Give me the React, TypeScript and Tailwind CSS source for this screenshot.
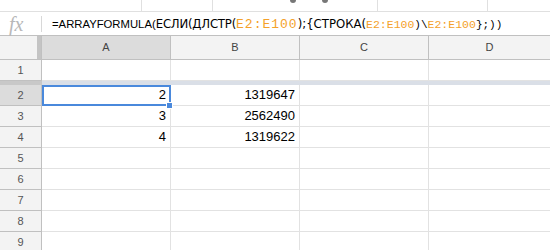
import React from "react";

const cols = ["A", "B", "C", "D"];
const rows: { n: number; a?: string; b?: string }[] = [
  { n: 1 },
  { n: 2, a: "2", b: "1319647" },
  { n: 3, a: "3", b: "2562490" },
  { n: 4, a: "4", b: "1319622" },
  { n: 5 },
  { n: 6 },
  { n: 7 },
  { n: 8 },
  { n: 9 },
];

const gridCols = "grid grid-cols-[42px_129px_129px_129px_1fr]";

function Row({ r }: { r: { n: number; a?: string; b?: string } }) {
  const sel = r.n === 2;
  return (
    <div className={gridCols + " h-[21px]"}>
      <div
        className={
          "flex items-center justify-center border-r border-b border-[#c0c0c0] text-[11px] text-[#555] " +
          (sel ? "bg-[#dcdcdc]" : "bg-[#f3f3f3]")
        }
      >
        {r.n}
      </div>
      <div className="relative flex items-center justify-end border-r border-b border-[#e2e2e2] pr-[4px] text-[13px] text-black">
        {r.a}
        {sel && (
          <>
            <div className="absolute z-10 left-0 top-0 -right-[1px] -bottom-[1px] border-2 border-[#4a89dc]" />
            <div className="absolute z-20 -right-[3px] -bottom-[4px] w-[7px] h-[7px] bg-[#4a89dc] border border-white" />
          </>
        )}
      </div>
      <div className="flex items-center justify-end border-r border-b border-[#e2e2e2] pr-[4px] text-[13px] text-black">
        {r.b}
      </div>
      <div className="border-r border-b border-[#e2e2e2]" />
      <div className="border-b border-[#e2e2e2]" />
    </div>
  );
}

export default function App() {
  const orange = "text-[#f4a12a]";
  const mono = "font-['Liberation_Mono',monospace]";
  const cyr = "font-['DejaVu_Sans_Condensed','Liberation_Sans',sans-serif]";
  return (
    <div className="w-[550px] h-[250px] overflow-hidden bg-white font-['Liberation_Sans',Arial,sans-serif]">
      {/* toolbar remnant */}
      <div className="flex h-[12px] border-b border-[#e0e0e0]">
        <div className="w-[142px] border-r border-[#e0e0e0]" />
        <div className="w-[71px] border-r border-[#e0e0e0]" />
        <div className="w-[165px] border-r border-[#e0e0e0] flex">
          <div className="ml-[77px] w-[6px] h-[3px] bg-[#777] rounded-b-sm" />
          <div className="ml-[26px] w-[6px] h-[3px] bg-[#777] rounded-b-sm" />
        </div>
        <div className="w-[110px] border-r border-[#e0e0e0]" />
      </div>

      {/* formula bar */}
      <div className="flex items-center h-[24px] border-b border-[#c0c0c0]">
        <div className="w-[41px] pl-[9px] font-['Liberation_Serif',serif] italic text-[20px] leading-none text-[#b8b8b8]">
          fx
        </div>
        <div className="w-px h-[16px] bg-[#d8d8d8]" />
        <div className="ml-[10px] flex items-baseline whitespace-pre text-black leading-none">
          <span className="font-['Liberation_Sans_Narrow','Liberation_Sans',sans-serif] text-[11.3px]">=ARRAYFORMULA(</span>
          <span className={cyr + " text-[13px] tracking-[-0.2px]"}>ЕСЛИ(ДЛСТР(</span>
          <span className={orange + " " + mono + " text-[13px] tracking-[1px]"}>E2:E100</span>
          <span className={cyr + " text-[13px]"}>);{"{"}СТРОКА(</span>
          <span className={orange + " " + mono + " text-[11.5px]"}>E2:E100</span>
          <span className={mono + " text-[11px]"}>)\</span>
          <span className={orange + " " + mono + " text-[11.5px]"}>E2:E100</span>
          <span className={mono + " text-[11px]"}>{"};))"}</span>
        </div>
      </div>

      {/* column headers */}
      <div className={gridCols + " h-[24px]"}>
        <div className="relative bg-[#f3f3f3] border-r border-b border-[#c0c0c0]">
          <div className="absolute right-0 top-0 bottom-0 w-[4px] bg-[#c4c4c4]" />
        </div>
        {cols.map((c, i) => (
          <div
            key={c}
            className={
              "flex items-center justify-center border-b border-[#c0c0c0] text-[11px] text-[#444] " +
              (i < 3 ? "border-r " : "") +
              (c === "A" ? "bg-[#dcdcdc]" : "bg-[#f3f3f3]")
            }
          >
            {c}
          </div>
        ))}
      </div>

      <Row r={rows[0]} />
      {/* frozen row bar */}
      <div className={gridCols + " h-[4px]"}>
        <div className="bg-[#c8c8c8]" />
        <div className="col-span-4 bg-[#dadfe7]" />
      </div>
      {rows.slice(1).map((r) => (
        <Row key={r.n} r={r} />
      ))}
    </div>
  );
}
